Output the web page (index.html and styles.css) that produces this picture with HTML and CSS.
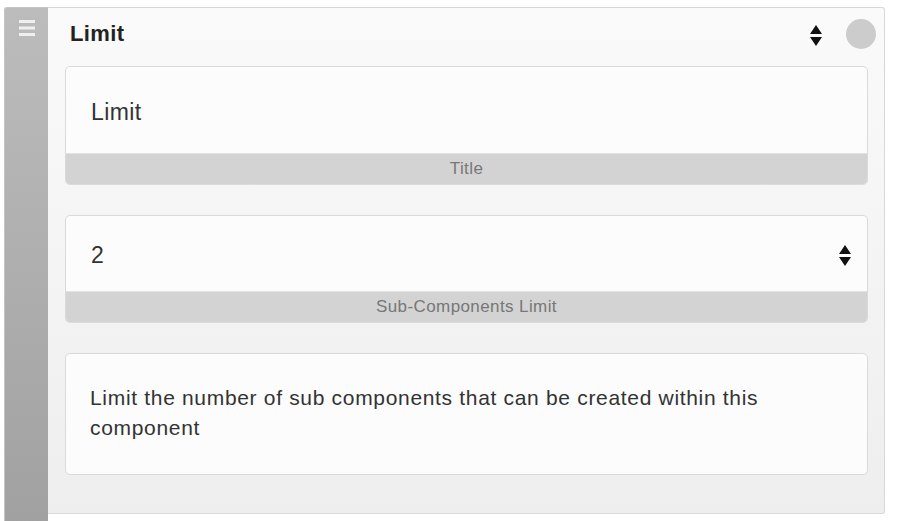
FILE: index.html
```html
<!DOCTYPE html>
<html>
<head>
<meta charset="utf-8">
<link rel="stylesheet" href="styles.css">
</head>
<body>
<div class="wrap">
  <div class="handle">
    <svg class="burger" width="16" height="16" viewBox="0 0 16 16"><rect x="0" y="0" width="16" height="3" fill="#efefef"/><rect x="0" y="6.5" width="16" height="3" fill="#efefef"/><rect x="0" y="13" width="16" height="3" fill="#efefef"/></svg>
  </div>
  <div class="panel">
    <div class="head">
      <span class="head-title">Limit</span>
      <svg class="sort" width="12" height="22" viewBox="0 0 12 22"><path d="M6 0 L12 9 L0 9 Z" fill="#111"/><path d="M0 12 L12 12 L6 21 Z" fill="#111"/></svg>
      <span class="dot"></span>
    </div>
    <div class="card">
      <div class="field f1"><span class="val">Limit</span></div>
      <div class="label">Title</div>
    </div>
    <div class="card">
      <div class="field f2"><span class="val">2</span>
        <svg class="spin" width="12" height="22" viewBox="0 0 12 22"><path d="M6 0 L12 9 L0 9 Z" fill="#111"/><path d="M0 12 L12 12 L6 21 Z" fill="#111"/></svg>
      </div>
      <div class="label">Sub-Components Limit</div>
    </div>
    <div class="card desc">
      <p>Limit the number of sub components that can be created within this component</p>
    </div>
  </div>
</div>
</body>
</html>
```
FILE: styles.css
```css
html, body {
  margin: 0;
  padding: 0;
  background: #fff;
  overflow: hidden;
  font-family: "Liberation Sans", Arial, sans-serif;
}
.wrap {
  display: flex;
  align-items: flex-start;
  margin: 7px 0 0 4px;
  width: 881px;
}
.handle {
  width: 44px;
  height: 530px;
  flex: none;
  border: 1px solid #c4c4c4;
  border-right: none;
  border-bottom: none;
  border-top-left-radius: 3px;
  background: linear-gradient(#bcbcbc, #a0a0a0);
  display: flex;
  justify-content: center;
  padding-top: 12px;
  box-sizing: border-box;
}
.burger { display: block; margin-left: 0; }
.panel {
  flex: 1;
  height: 507px;
  box-sizing: border-box;
  border: 1px solid #d8d8d8;
  border-left: none;
  border-top-right-radius: 3px;
  border-bottom-right-radius: 3px;
  background: linear-gradient(#fafafa, #eeeeee);
  padding: 0 16px 0 17px;
}
.head {
  height: 52px;
  display: flex;
  align-items: center;
  margin-left: -17px;
  margin-right: -16px;
  padding-left: 22px;
  margin-bottom: 6px;
}
.head-title {
  font-weight: bold;
  font-size: 22px;
  letter-spacing: 0.4px;
  color: #222;
  flex: 1;
}
.sort { margin-top: 4px; margin-right: 24px; }
.dot {
  width: 30px;
  height: 30px;
  border-radius: 50%;
  background: #cccccc;
  margin-right: 8px;
}
.card {
  border: 1px solid #dadada;
  border-radius: 5px;
  background: #fcfcfc;
  overflow: hidden;
  margin-bottom: 30px;
}
.field {
  display: flex;
  align-items: center;
  padding: 0 16px 0 25px;
}
.f1 { height: 86px; }
.f2 { height: 75px; justify-content: space-between; }
.val {
  font-size: 23px;
  letter-spacing: 0.4px;
  color: #333;
}
.f1 .val { margin-top: 4px; }
.f2 .val { margin-top: 4px; }
.spin { margin-top: 4px; }
.label {
  height: 30px;
  background: #d3d3d3;
  border-top: 1px solid #e2e2e2;
  color: #777;
  font-size: 17px;
  letter-spacing: 0.4px;
  display: flex;
  align-items: center;
  justify-content: center;
}
.desc {
  height: 122px;
  box-sizing: border-box;
  padding: 29px 23px 0 24px;
}
.desc p {
  margin: 0;
  font-size: 21px;
  letter-spacing: 0.68px;
  line-height: 30px;
  color: #333;
}
```
